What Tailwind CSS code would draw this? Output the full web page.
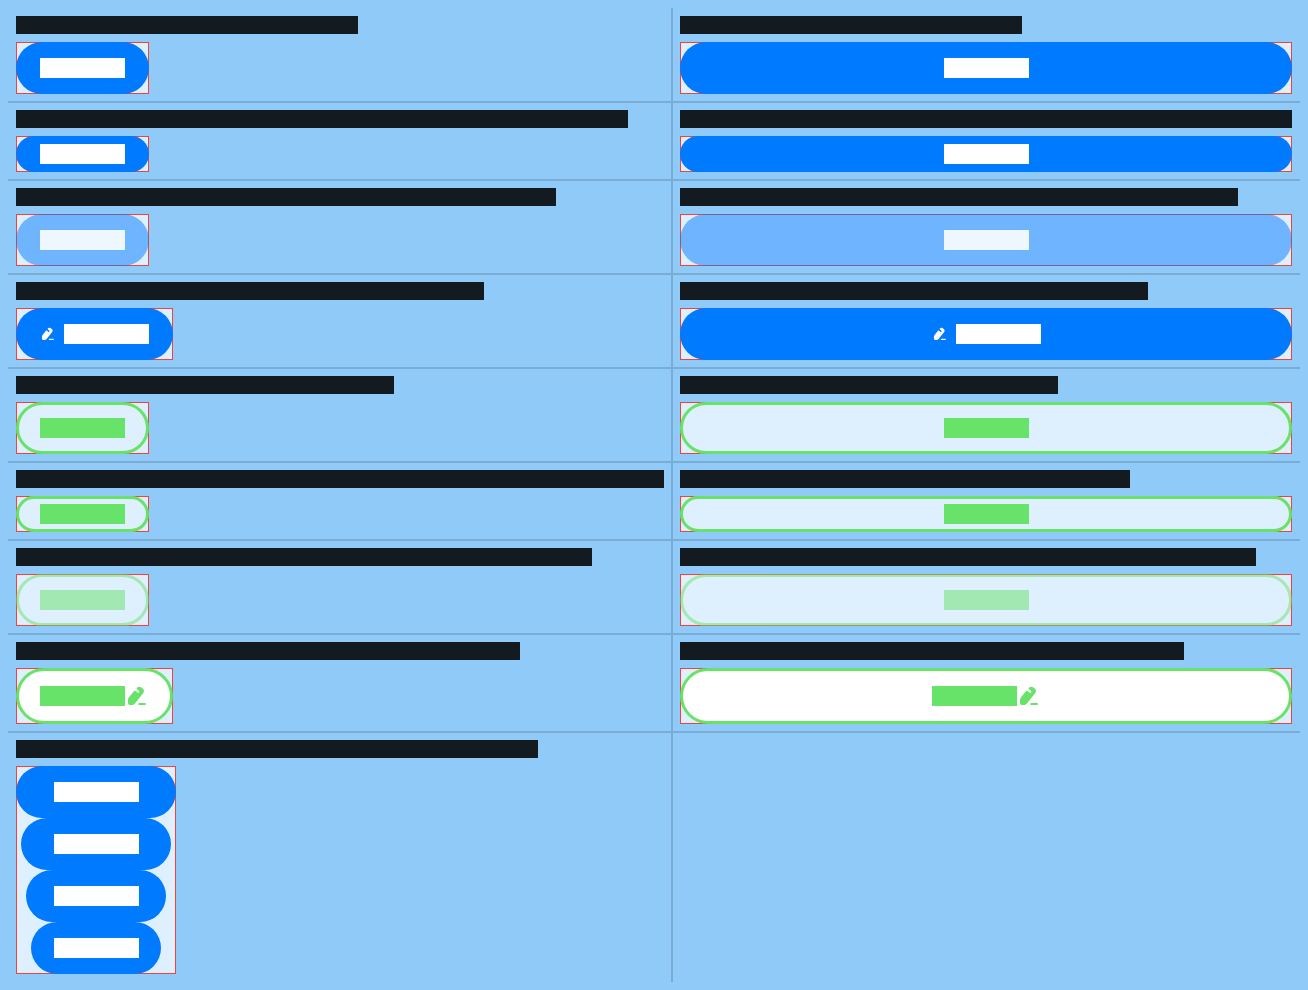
<!DOCTYPE html>
<html lang="en">
<head>
<meta charset="utf-8">
<meta name="viewport" content="width=device-width, initial-scale=1">
<title>Buttons</title>
<script src="https://cdn.jsdelivr.net/npm/@tailwindcss/browser@4"></script>
</head>
<body class="min-h-screen bg-[#90caf9] p-2 font-['Roboto',sans-serif]">
<svg class="hidden" aria-hidden="true">
  <symbol id="edit" viewBox="0 0 24 24">
    <path fill="currentColor" d="M8.6 7.4 C9.2 6.7 9.9 6.6 10.6 7.1 L12.4 8.6 C13.3 9.4 14.5 8.6 14.2 7.4 C14.1 6.9 13.8 6.5 13.3 6.2 L11.9 5.2 C11.4 4.8 11.4 4.3 11.8 3.9 C12.9 2.5 14.6 2.3 16 3.3 L17.7 4.6 C19.2 5.8 19.4 7.6 18.3 9 L10.2 19.2 C9.1 20.5 8 21.1 6.4 21.1 L5.5 21.1 C4 21.1 3 20.2 2.9 18.7 L2.8 17.2 C2.8 15.8 3.1 14.7 3.9 13.6 Z"/>
    <rect x="13.2" y="19" width="7.8" height="2" rx="1" fill="currentColor"/>
  </symbol>
</svg>
<main class="grid grid-cols-[auto_1fr]">
  <!-- Filled -->
  <section class="flex flex-col items-start gap-2 border-r-2 border-b-2 border-black/15 pt-2 pr-[7px] pb-[7px] pl-2">
    <div class="h-[18px] w-[342px] bg-[#131a20]"></div>
    <div class="flex bg-white/70 shadow-[inset_0_0_0_1px_#f44336]"><button type="button" aria-label="Filled" class="flex h-13 items-center justify-center rounded-full bg-[#007aff] px-6"><span class="h-5 w-[85px] bg-white"></span></button></div>
  </section>
  <section class="flex flex-col items-start gap-2 border-b-2 border-black/15 pt-2 pr-2 pb-[7px] pl-[7px]">
    <div class="h-[18px] w-[342px] bg-[#131a20]"></div>
    <div class="flex w-full bg-white/70 shadow-[inset_0_0_0_1px_#f44336]"><button type="button" aria-label="Filled, expanded" class="flex h-13 w-full items-center justify-center rounded-full bg-[#007aff] px-6"><span class="h-5 w-[85px] bg-white"></span></button></div>
  </section>

  <!-- Filled, small -->
  <section class="flex flex-col items-start gap-2 border-r-2 border-b-2 border-black/15 pt-[7px] pr-[7px] pb-[7px] pl-2">
    <div class="h-[18px] w-[612px] bg-[#131a20]"></div>
    <div class="flex bg-white/70 shadow-[inset_0_0_0_1px_#f44336]"><button type="button" aria-label="Filled small" class="flex h-9 items-center justify-center rounded-full bg-[#007aff] px-6"><span class="h-5 w-[85px] bg-white"></span></button></div>
  </section>
  <section class="flex flex-col items-start gap-2 border-b-2 border-black/15 pt-[7px] pr-2 pb-[7px] pl-[7px]">
    <div class="h-[18px] w-full bg-[#131a20]"></div>
    <div class="flex w-full bg-white/70 shadow-[inset_0_0_0_1px_#f44336]"><button type="button" aria-label="Filled small, expanded" class="flex h-9 w-full items-center justify-center rounded-full bg-[#007aff] px-6"><span class="h-5 w-[85px] bg-white"></span></button></div>
  </section>

  <!-- Filled, disabled -->
  <section class="flex flex-col items-start gap-2 border-r-2 border-b-2 border-black/15 pt-[7px] pr-[7px] pb-[7px] pl-2">
    <div class="h-[18px] w-[540px] bg-[#131a20]"></div>
    <div class="flex bg-white/70 shadow-[inset_0_0_0_1px_#f44336]"><button type="button" disabled aria-label="Filled disabled" class="flex h-13 items-center justify-center rounded-full bg-[#007aff] px-6 opacity-50"><span class="h-5 w-[85px] bg-white"></span></button></div>
  </section>
  <section class="flex flex-col items-start gap-2 border-b-2 border-black/15 pt-[7px] pr-2 pb-[7px] pl-[7px]">
    <div class="h-[18px] w-[558px] bg-[#131a20]"></div>
    <div class="flex w-full bg-white/70 shadow-[inset_0_0_0_1px_#f44336]"><button type="button" disabled aria-label="Filled disabled, expanded" class="flex h-13 w-full items-center justify-center rounded-full bg-[#007aff] px-6 opacity-50"><span class="h-5 w-[85px] bg-white"></span></button></div>
  </section>

  <!-- Filled, leading icon -->
  <section class="flex flex-col items-start gap-2 border-r-2 border-b-2 border-black/15 pt-[7px] pr-[7px] pb-[7px] pl-2">
    <div class="h-[18px] w-[468px] bg-[#131a20]"></div>
    <div class="flex bg-white/70 shadow-[inset_0_0_0_1px_#f44336]"><button type="button" aria-label="Filled with icon" class="flex h-13 items-center justify-center gap-2 rounded-full bg-[#007aff] px-6 text-white"><svg class="size-4"><use href="#edit"/></svg><span class="h-5 w-[85px] bg-white"></span></button></div>
  </section>
  <section class="flex flex-col items-start gap-2 border-b-2 border-black/15 pt-[7px] pr-2 pb-[7px] pl-[7px]">
    <div class="h-[18px] w-[468px] bg-[#131a20]"></div>
    <div class="flex w-full bg-white/70 shadow-[inset_0_0_0_1px_#f44336]"><button type="button" aria-label="Filled with icon, expanded" class="flex h-13 w-full items-center justify-center gap-2 rounded-full bg-[#007aff] px-6 text-white"><svg class="size-4"><use href="#edit"/></svg><span class="h-5 w-[85px] bg-white"></span></button></div>
  </section>

  <!-- Outlined -->
  <section class="flex flex-col items-start gap-2 border-r-2 border-b-2 border-black/15 pt-[7px] pr-[7px] pb-[7px] pl-2">
    <div class="h-[18px] w-[378px] bg-[#131a20]"></div>
    <div class="flex bg-white/70 shadow-[inset_0_0_0_1px_#f44336]"><button type="button" aria-label="Outlined" class="flex h-13 items-center justify-center rounded-full border-3 border-[#67e36a] px-[21px]"><span class="h-5 w-[85px] bg-[#67e36a]"></span></button></div>
  </section>
  <section class="flex flex-col items-start gap-2 border-b-2 border-black/15 pt-[7px] pr-2 pb-[7px] pl-[7px]">
    <div class="h-[18px] w-[378px] bg-[#131a20]"></div>
    <div class="flex w-full bg-white/70 shadow-[inset_0_0_0_1px_#f44336]"><button type="button" aria-label="Outlined, expanded" class="flex h-13 w-full items-center justify-center rounded-full border-3 border-[#67e36a] px-[21px]"><span class="h-5 w-[85px] bg-[#67e36a]"></span></button></div>
  </section>

  <!-- Outlined, small -->
  <section class="flex flex-col items-start gap-2 border-r-2 border-b-2 border-black/15 pt-[7px] pr-[7px] pb-[7px] pl-2">
    <div class="h-[18px] w-[648px] bg-[#131a20]"></div>
    <div class="flex bg-white/70 shadow-[inset_0_0_0_1px_#f44336]"><button type="button" aria-label="Outlined small" class="flex h-9 items-center justify-center rounded-full border-3 border-[#67e36a] px-[21px]"><span class="h-5 w-[85px] bg-[#67e36a]"></span></button></div>
  </section>
  <section class="flex flex-col items-start gap-2 border-b-2 border-black/15 pt-[7px] pr-2 pb-[7px] pl-[7px]">
    <div class="h-[18px] w-[450px] bg-[#131a20]"></div>
    <div class="flex w-full bg-white/70 shadow-[inset_0_0_0_1px_#f44336]"><button type="button" aria-label="Outlined small, expanded" class="flex h-9 w-full items-center justify-center rounded-full border-3 border-[#67e36a] px-[21px]"><span class="h-5 w-[85px] bg-[#67e36a]"></span></button></div>
  </section>

  <!-- Outlined, disabled -->
  <section class="flex flex-col items-start gap-2 border-r-2 border-b-2 border-black/15 pt-[7px] pr-[7px] pb-[7px] pl-2">
    <div class="h-[18px] w-[576px] bg-[#131a20]"></div>
    <div class="flex bg-white/70 shadow-[inset_0_0_0_1px_#f44336]"><button type="button" disabled aria-label="Outlined disabled" class="flex h-13 items-center justify-center rounded-full border-3 border-[#67e36a] px-[21px] opacity-50"><span class="h-5 w-[85px] bg-[#67e36a]"></span></button></div>
  </section>
  <section class="flex flex-col items-start gap-2 border-b-2 border-black/15 pt-[7px] pr-2 pb-[7px] pl-[7px]">
    <div class="h-[18px] w-[576px] bg-[#131a20]"></div>
    <div class="flex w-full bg-white/70 shadow-[inset_0_0_0_1px_#f44336]"><button type="button" disabled aria-label="Outlined disabled, expanded" class="flex h-13 w-full items-center justify-center rounded-full border-3 border-[#67e36a] px-[21px] opacity-50"><span class="h-5 w-[85px] bg-[#67e36a]"></span></button></div>
  </section>

  <!-- Outlined, trailing icon -->
  <section class="flex flex-col items-start gap-2 border-r-2 border-b-2 border-black/15 pt-[7px] pr-[7px] pb-[7px] pl-2">
    <div class="h-[18px] w-[504px] bg-[#131a20]"></div>
    <div class="flex bg-white/70 shadow-[inset_0_0_0_1px_#f44336]"><button type="button" aria-label="Outlined with icon" class="flex h-14 items-center justify-center rounded-full border-3 border-[#67e36a] bg-white px-[21px] text-[#67e36a]"><span class="h-5 w-[85px] bg-[#67e36a]"></span><svg class="size-6"><use href="#edit"/></svg></button></div>
  </section>
  <section class="flex flex-col items-start gap-2 border-b-2 border-black/15 pt-[7px] pr-2 pb-[7px] pl-[7px]">
    <div class="h-[18px] w-[504px] bg-[#131a20]"></div>
    <div class="flex w-full bg-white/70 shadow-[inset_0_0_0_1px_#f44336]"><button type="button" aria-label="Outlined with icon, expanded" class="flex h-14 w-full items-center justify-center rounded-full border-3 border-[#67e36a] bg-white px-[21px] text-[#67e36a]"><span class="h-5 w-[85px] bg-[#67e36a]"></span><svg class="size-6"><use href="#edit"/></svg></button></div>
  </section>

  <!-- Stack of widths -->
  <section class="flex flex-col items-start gap-2 border-r-2 border-black/15 pt-[7px] pr-[7px] pb-2 pl-2">
    <div class="h-[18px] w-[522px] bg-[#131a20]"></div>
    <div class="flex flex-col items-center bg-white/70 shadow-[inset_0_0_0_1px_#f44336]">
      <button type="button" aria-label="Width 160" class="flex h-13 w-40 items-center justify-center rounded-full bg-[#007aff]"><span class="h-5 w-[85px] bg-white"></span></button>
      <button type="button" aria-label="Width 150" class="flex h-13 w-[150px] items-center justify-center rounded-full bg-[#007aff]"><span class="h-5 w-[85px] bg-white"></span></button>
      <button type="button" aria-label="Width 140" class="flex h-13 w-35 items-center justify-center rounded-full bg-[#007aff]"><span class="h-5 w-[85px] bg-white"></span></button>
      <button type="button" aria-label="Width 130" class="flex h-13 w-[130px] items-center justify-center rounded-full bg-[#007aff]"><span class="h-5 w-[85px] bg-white"></span></button>
    </div>
  </section>
  <section></section>
</main>
</body>
</html>
